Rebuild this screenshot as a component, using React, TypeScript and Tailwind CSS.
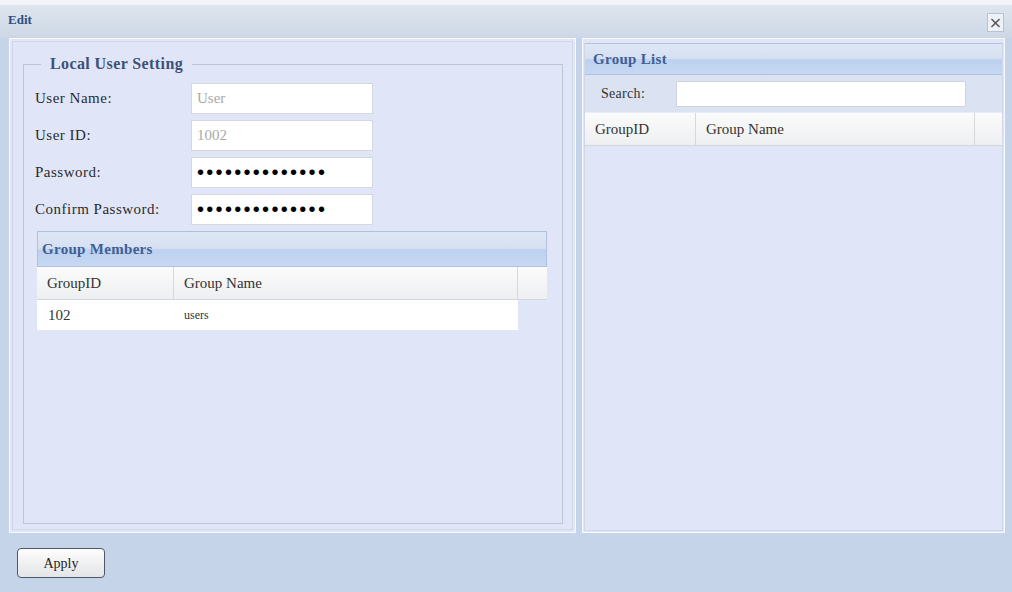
import React from "react";

const serif = { fontFamily: '"Liberation Serif", "Times New Roman", serif' };

function Field({ label, value, type = "text", disabled = false }: { label: string; value: string; type?: string; disabled?: boolean }) {
  return (
    <div className="flex items-center h-[31px]">
      <div className="w-[156px] text-[15px] text-[#2b2b2b] tracking-[0.5px]">{label}</div>
      <input
        readOnly
        type={type}
        value={value}
        className={
          "w-[182px] h-[31px] bg-white border border-[#d4d8de] px-[5px] outline-none " +
          (type === "password"
            ? "text-[20px] tracking-[2.3px] text-black"
            : "text-[15px] text-[#a9a9a9]")
        }
        style={type === "password" ? { fontFamily: '"Liberation Sans", Arial, sans-serif' } : serif}
        disabled={disabled}
      />
    </div>
  );
}

function GlossHeader({ title, className = "" }: { title: string; className?: string }) {
  return (
    <div
      className={
        "flex items-center border border-[#aec2de] bg-[linear-gradient(to_bottom,#dfe7f5_0%,#d5e0f2_48%,#bdd1ef_52%,#c6d8f2_100%)] text-[15px] font-bold text-[#3f5f95] tracking-[0.3px] " +
        className
      }
    >
      {title}
    </div>
  );
}

function TableHeader({ cols }: { cols: { w: string; label: string }[] }) {
  return (
    <div className="flex h-[33px] bg-[linear-gradient(to_bottom,#fbfbfb,#eeeff1)] border-b border-[#d3d6dc]">
      {cols.map((c, i) => (
        <div
          key={i}
          className={"flex items-center pl-[10px] text-[15px] text-[#333] border-r border-[#d6d8dc] " + c.w}
        >
          {c.label}
        </div>
      ))}
    </div>
  );
}

export default function App() {
  return (
    <div className="w-[1012px] h-[592px] flex flex-col bg-[#c5d4e9] overflow-hidden" style={serif}>
      <div className="h-[5px] bg-[#f2f4f7]" />
      <div className="h-[33px] flex items-start justify-between pl-[8px] pr-[8px] pt-[5px] bg-[linear-gradient(to_bottom,#dfe5ee,#ccd7e6)]">
        <span className="text-[13px] font-bold text-[#2f4f86]">Edit</span>
        <div className="w-[17px] h-[19px] mt-[3px] border border-[#b9c2cf] bg-[#eef1f5] flex items-center justify-center text-[#555] text-[16px] leading-none" style={{ fontFamily: '"DejaVu Sans", sans-serif' }}>
          ×
        </div>
      </div>

      <div className="flex gap-[6px] pl-[9px] h-[495px]">
        {/* Left panel */}
        <div className="w-[567px] h-full border border-[#f7f9fd] bg-[#e0e6f8] p-[2px]">
          <div className="h-full border border-[#cfd8ea] pl-[10px] pr-[9px] pt-[13px] pb-[5px]">
            <fieldset className="h-full border border-[#bcc6d8] pl-[11px] pr-[10px]">
              <legend className="ml-[6px] px-[9px] text-[16px] font-bold text-[#3f5074] leading-[18px] tracking-[0.4px]">
                Local User Setting
              </legend>
              <div className="mt-[10px] flex flex-col gap-[6px]">
                <Field label="User Name:" value="User" disabled />
                <Field label="User ID:" value="1002" disabled />
                <Field label="Password:" value="••••••••••••••" type="password" />
                <Field label="Confirm Password:" value="••••••••••••••" type="password" />
              </div>
              <div className="mt-[6px] ml-[2px] w-[510px]">
                <GlossHeader title="Group Members" className="h-[36px] pl-[4px]" />
                <TableHeader
                  cols={[
                    { w: "w-[137px]", label: "GroupID" },
                    { w: "w-[344px]", label: "Group Name" },
                    { w: "flex-1 border-r-0", label: "" },
                  ]}
                />
                <div className="flex h-[30px] w-[481px] bg-white items-center">
                  <div className="w-[137px] pl-[11px] text-[15px] text-[#333]">102</div>
                  <div className="pl-[10px] text-[12px] text-[#333]">users</div>
                </div>
              </div>
            </fieldset>
          </div>
        </div>

        {/* Right panel */}
        <div className="w-[423px] h-full border border-[#f7f9fd] bg-[#e0e6f8] p-[1px] pt-[4px]">
          <div className="h-full border border-[#cfd8ea] border-t-0">
            <GlossHeader title="Group List" className="h-[32px] border-x-0 pl-[8px]" />
            <div className="h-[38px] flex items-center bg-[#dbe3f3] border-b border-[#e8edf7]">
              <span className="w-[91px] pl-[16px] text-[14px] text-[#333] tracking-[0.3px]">Search:</span>
              <input readOnly className="w-[290px] h-[26px] bg-white border border-[#cfd5df] outline-none" />
            </div>
            <TableHeader
              cols={[
                { w: "w-[111px]", label: "GroupID" },
                { w: "w-[279px]", label: "Group Name" },
                { w: "flex-1 border-r-0", label: "" },
              ]}
            />
          </div>
        </div>
      </div>

      <div className="flex-1 pl-[17px] pt-[15px]">
        <button className="w-[88px] h-[30px] rounded-[4px] border border-[#4f5866] bg-[linear-gradient(to_bottom,#fdfdfd,#e4e5e8)] text-[14px] text-[#222]" style={serif}>
          Apply
        </button>
      </div>
    </div>
  );
}
